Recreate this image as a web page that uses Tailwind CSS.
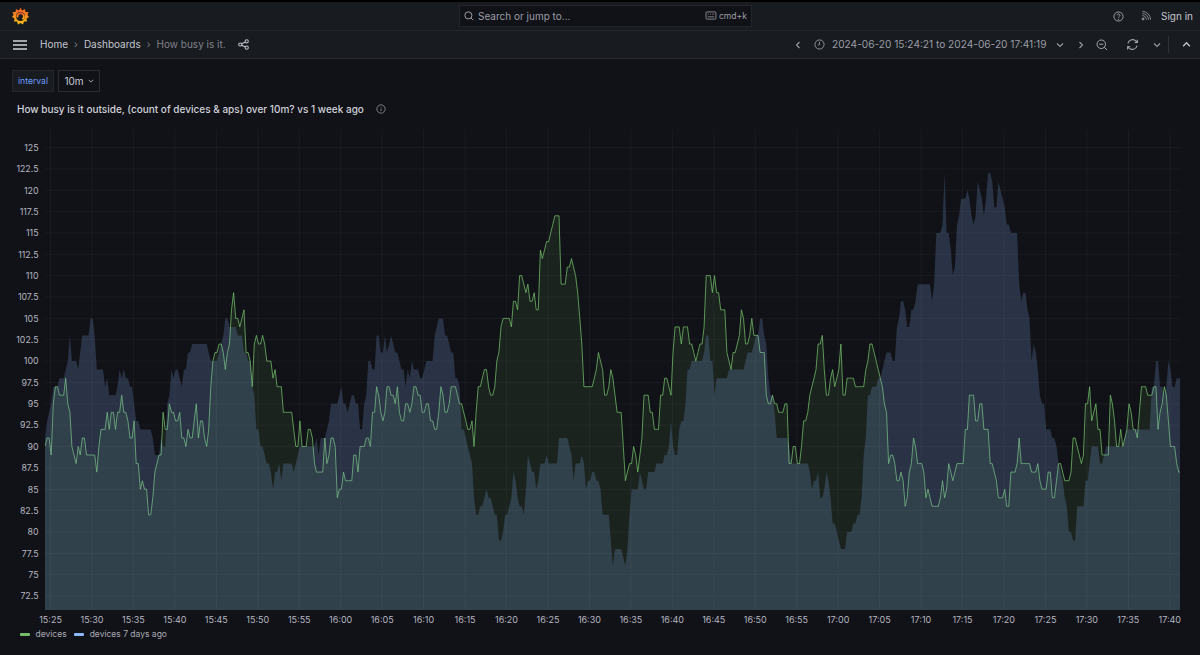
<!DOCTYPE html>
<html>
<head>
<meta charset="utf-8">
<script src="https://cdn.jsdelivr.net/npm/@tailwindcss/browser@4"></script>
</head>
<body class="bg-[#111217] overflow-hidden font-[Inter,sans-serif]">
<div class="w-[1200px] h-[655px] flex flex-col overflow-hidden text-[#ccccdc]">
  <div class="h-[2px] bg-black"></div>
  <header class="h-[29px] bg-[#181b1f] border-b border-[#25272c] flex items-center pl-[12px] pr-[7px]">
    <svg class="w-[17px] h-[18px]" viewBox="0 0 34 36">
      <defs><linearGradient id="lg" x1="0" y1="1" x2="0" y2="0"><stop offset="0" stop-color="#fcc216"/><stop offset="1" stop-color="#f05a28"/></linearGradient></defs>
      <path d="M17 1l3 6 6-3 1 6 6 0-2 6 3 4-5 3 1 6-6 0-2 6-5-3-5 3-2-6-6 0 1-6-5-3 3-4-2-6 6 0 1-6 6 3z" fill="url(#lg)"/>
      <circle cx="17" cy="19" r="9" fill="#181b1f"/>
      <path d="M11 21a6.5 6.5 0 1 1 10 3.5" fill="none" stroke="url(#lg)" stroke-width="3.5"/>
    </svg>
    <div class="ml-[430px] w-[293px] h-[22px] bg-[#111217] border border-[#22252b] flex items-center pl-[4px] pr-[4px] text-[#9a9ca6]">
      <svg class="w-[10px] h-[10px]" viewBox="0 0 24 24" fill="none" stroke="#b5b7c2" stroke-width="2"><circle cx="10.5" cy="10.5" r="8.5"/><path d="M16.5 16.5l5.5 5.5"/></svg>
      <span class="text-[10px] ml-[4px]">Search or jump to...</span>
      <span class="ml-auto flex items-center gap-[2px] text-[8.6px]">
        <svg class="w-[12px] h-[9px]" viewBox="0 0 24 20" fill="none" stroke="#8e909b" stroke-width="2"><rect x="1" y="2" width="22" height="16" rx="2"/><path d="M5 7h2M10 7h2M15 7h4M5 13h14"/></svg>
        cmd+k
      </span>
    </div>
    <svg class="ml-auto w-[11px] h-[11px]" viewBox="0 0 24 24" fill="none" stroke="#a6a8b2" stroke-width="2"><circle cx="12" cy="12" r="10"/><path d="M9 9.5a3 3 0 1 1 4.5 2.6c-1 .6-1.5 1.2-1.5 2.4"/><circle cx="12" cy="18" r=".6"/></svg>
    <svg class="ml-[17px] w-[10px] h-[10px]" viewBox="0 0 24 24" fill="none" stroke="#8e909b" stroke-width="2.2"><circle cx="5" cy="19" r="2.4" fill="#8e909b"/><path d="M3 11a10 10 0 0 1 10 10M3 6a15 15 0 0 1 15 15M3 1a20 20 0 0 1 20 20"/></svg>
    <span class="ml-[10px] text-[10px] text-[#c4c6d0]">Sign in</span>
  </header>
  <nav class="h-[28px] bg-[#181b1f] border-b border-[#2a2c31] flex items-center pl-[13px] pr-[9px] text-[10px]">
    <svg class="w-[14px] h-[10px]" viewBox="0 0 14 10" stroke="#d3d4dc" stroke-width="1.3"><path d="M0 1h14M0 5h14M0 9h14"/></svg>
    <span class="ml-[13px] text-[#c4c6d0]">Home</span>
    <span class="mx-[6px] text-[#7b7d87]">›</span>
    <span class="text-[#c4c6d0]">Dashboards</span>
    <span class="mx-[6px] text-[#7b7d87]">›</span>
    <span class="text-[#80828c]">How busy is it.</span>
    <svg class="ml-[12px] w-[11px] h-[11px]" viewBox="0 0 24 24" fill="none" stroke="#c4c6d0" stroke-width="2.2"><circle cx="5" cy="12" r="3.5"/><circle cx="19" cy="5" r="3.5"/><circle cx="19" cy="19" r="3.5"/><path d="M8 10.5l8-4M8 13.5l8 4"/></svg>
    <div class="ml-auto flex items-center text-[#9a9ca6]">
      <svg class="w-[8px] h-[8px]" viewBox="0 0 8 8" fill="none" stroke="#9a9ca6" stroke-width="1.1"><path d="M5.5 1l-3 3 3 3"/></svg>
      <svg class="ml-[11.5px] w-[11px] h-[11px]" viewBox="0 0 24 24" fill="none" stroke="#9a9ca6" stroke-width="2"><circle cx="12" cy="12" r="10"/><path d="M12 6v6l-3.5 2"/></svg>
      <span class="ml-[7.5px] text-[10.15px]">2024-06-20 15:24:21 to 2024-06-20 17:41:19</span>
      <svg class="ml-[9px] w-[8px] h-[8px]" viewBox="0 0 8 8" fill="none" stroke="#9a9ca6" stroke-width="1.1"><path d="M1 2.5l3 3 3-3"/></svg>
      <svg class="ml-[13px] w-[8px] h-[8px]" viewBox="0 0 8 8" fill="none" stroke="#9a9ca6" stroke-width="1.1"><path d="M2.5 1l3 3-3 3"/></svg>
      <svg class="ml-[11px] w-[12px] h-[12px]" viewBox="0 0 24 24" fill="none" stroke="#a6a8b2" stroke-width="2"><circle cx="10.5" cy="10.5" r="8.5"/><path d="M6.5 10.5h8M16.5 16.5l5.5 5.5"/></svg>
      <svg class="ml-[18.5px] w-[13px] h-[13px]" viewBox="0 0 24 24" fill="none" stroke="#a6a8b2" stroke-width="2"><path d="M3.5 10a9 9 0 0 1 15.5-4l2 2M20.5 14a9 9 0 0 1-15.5 4l-2-2"/><path d="M21 3v5h-5M3 21v-5h5"/></svg>
      <svg class="ml-[14px] w-[8px] h-[8px]" viewBox="0 0 8 8" fill="none" stroke="#9a9ca6" stroke-width="1.1"><path d="M1 2.5l3 3 3-3"/></svg>
      <div class="ml-[7px] w-px h-[17px] bg-[#2f3136]"></div>
      <svg class="ml-[13px] w-[9px] h-[9px]" viewBox="0 0 8 8" fill="none" stroke="#c4c6d0" stroke-width="1.2"><path d="M1 5.5l3-3 3 3"/></svg>
    </div>
  </nav>
  <div class="pl-[12px] pt-[11px] flex gap-[4px]">
    <div class="w-[42px] h-[22px] bg-[#181b1f] border border-[#25272c] flex items-center justify-center text-[8.6px] text-[#6e9fff]">interval</div>
    <div class="w-[42px] h-[22px] border border-[#2a2c31] flex items-center justify-center gap-[4px] text-[10px] text-[#ccccdc]">10m
      <svg class="w-[6px] h-[6px]" viewBox="0 0 8 8" fill="none" stroke="#a6a8b2" stroke-width="1.3"><path d="M1 2.5l3 3 3-3"/></svg>
    </div>
  </div>
  <div class="h-[34px] pl-[17px] flex items-center text-[10px] font-medium text-[#d0d1da]">
    How busy is it outside, (count of devices &amp; aps) over 10m? vs 1 week ago
    <svg class="ml-[12px] w-[10px] h-[10px]" viewBox="0 0 24 24" fill="none" stroke="#8e909b" stroke-width="2"><circle cx="12" cy="12" r="10"/><path d="M12 11v6M12 7v1.5"/></svg>
  </div>
  <div class="flex">
    <div class="w-[45px] pt-[10.8px] pr-[6.5px] flex flex-col text-[8.8px] text-[#b5b6c0] text-right">
      <div class="h-[21.36px] leading-[21.36px]">125</div><div class="h-[21.36px] leading-[21.36px]">122.5</div><div class="h-[21.36px] leading-[21.36px]">120</div><div class="h-[21.36px] leading-[21.36px]">117.5</div><div class="h-[21.36px] leading-[21.36px]">115</div><div class="h-[21.36px] leading-[21.36px]">112.5</div><div class="h-[21.36px] leading-[21.36px]">110</div><div class="h-[21.36px] leading-[21.36px]">107.5</div><div class="h-[21.36px] leading-[21.36px]">105</div><div class="h-[21.36px] leading-[21.36px]">102.5</div><div class="h-[21.36px] leading-[21.36px]">100</div><div class="h-[21.36px] leading-[21.36px]">97.5</div><div class="h-[21.36px] leading-[21.36px]">95</div><div class="h-[21.36px] leading-[21.36px]">92.5</div><div class="h-[21.36px] leading-[21.36px]">90</div><div class="h-[21.36px] leading-[21.36px]">87.5</div><div class="h-[21.36px] leading-[21.36px]">85</div><div class="h-[21.36px] leading-[21.36px]">82.5</div><div class="h-[21.36px] leading-[21.36px]">80</div><div class="h-[21.36px] leading-[21.36px]">77.5</div><div class="h-[21.36px] leading-[21.36px]">75</div><div class="h-[21.36px] leading-[21.36px]">72.5</div>
    </div>
    <svg class="block w-[1135px] h-[484px]" viewBox="45 126 1135 484">
      <polygon id="ga" fill="#73bf69" fill-opacity=".1"/>
      <polyline id="gl" fill="none" stroke="#73bf69" stroke-opacity=".75" stroke-width="1" stroke-linejoin="round"/>
      <polygon id="ba" fill="#8ab8ff" fill-opacity=".2"/>
      <g stroke="#ccccdc" stroke-opacity=".05" stroke-width="1">
        <path d="M45 147.5H1180M45 168.9H1180M45 190.2H1180M45 211.6H1180M45 232.9H1180M45 254.3H1180M45 275.7H1180M45 297H1180M45 318.4H1180M45 339.7H1180M45 361.1H1180M45 382.5H1180M45 403.8H1180M45 425.2H1180M45 446.5H1180M45 467.9H1180M45 489.3H1180M45 510.6H1180M45 532H1180M45 553.3H1180M45 574.7H1180M45 596H1180"/>
        <path d="M50.5 130V610M92 130V610M133.4 130V610M174.9 130V610M216.3 130V610M257.8 130V610M299.3 130V610M340.7 130V610M382.2 130V610M423.6 130V610M465.1 130V610M506.6 130V610M548 130V610M589.5 130V610M630.9 130V610M672.4 130V610M713.9 130V610M755.3 130V610M796.8 130V610M838.2 130V610M879.7 130V610M921.2 130V610M962.6 130V610M1004.1 130V610M1045.5 130V610M1087 130V610M1128.5 130V610M1169.9 130V610"/>
      </g>
    </svg>
  </div>
  <div class="h-[19px] pl-[29.8px] flex items-center text-[9px] text-[#b5b6c0]">
    <span class="w-[41.46px] shrink-0 text-center">15:25</span><span class="w-[41.46px] shrink-0 text-center">15:30</span><span class="w-[41.46px] shrink-0 text-center">15:35</span><span class="w-[41.46px] shrink-0 text-center">15:40</span><span class="w-[41.46px] shrink-0 text-center">15:45</span><span class="w-[41.46px] shrink-0 text-center">15:50</span><span class="w-[41.46px] shrink-0 text-center">15:55</span><span class="w-[41.46px] shrink-0 text-center">16:00</span><span class="w-[41.46px] shrink-0 text-center">16:05</span><span class="w-[41.46px] shrink-0 text-center">16:10</span><span class="w-[41.46px] shrink-0 text-center">16:15</span><span class="w-[41.46px] shrink-0 text-center">16:20</span><span class="w-[41.46px] shrink-0 text-center">16:25</span><span class="w-[41.46px] shrink-0 text-center">16:30</span><span class="w-[41.46px] shrink-0 text-center">16:35</span><span class="w-[41.46px] shrink-0 text-center">16:40</span><span class="w-[41.46px] shrink-0 text-center">16:45</span><span class="w-[41.46px] shrink-0 text-center">16:50</span><span class="w-[41.46px] shrink-0 text-center">16:55</span><span class="w-[41.46px] shrink-0 text-center">17:00</span><span class="w-[41.46px] shrink-0 text-center">17:05</span><span class="w-[41.46px] shrink-0 text-center">17:10</span><span class="w-[41.46px] shrink-0 text-center">17:15</span><span class="w-[41.46px] shrink-0 text-center">17:20</span><span class="w-[41.46px] shrink-0 text-center">17:25</span><span class="w-[41.46px] shrink-0 text-center">17:30</span><span class="w-[41.46px] shrink-0 text-center">17:35</span><span class="w-[41.46px] shrink-0 text-center">17:40</span>
  </div>
  <div class="h-[10px] pl-[20px] flex items-center text-[8.5px] text-[#a9aab4]">
    <span class="w-[10px] h-[3px] rounded-[1px] bg-[#73bf69]"></span><span class="ml-[5.5px]">devices</span>
    <span class="ml-[7px] w-[10px] h-[3px] rounded-[1px] bg-[#8ab8ff]"></span><span class="ml-[6px]">devices 7 days ago</span>
  </div>
</div>
<script>
var green = "45,447 48,438 50,438 52,455 53,447 55,405 57,387 60,397 63,397 66,378 68,405 72,422 73,447 77,464 80,448 82,456 83,438 86,438 88,455 95,455 97,472 100,448 103,430 106,430 108,413 111,430 113,413 117,430 119,413 123,397 125,413 128,422 132,438 134,438 136,422 138,463 142,490 143,482 145,490 148,490 150,516 153,498 155,472 157,464 159,455 163,455 165,413 167,430 171,405 173,413 177,422 180,413 183,438 186,447 189,430 192,438 197,405 199,438 202,422 207,447 210,430 212,383 213,362 217,353 220,345 223,345 225,353 227,370 229,353 232,310 235,293 237,318 240,327 242,320 245,310 247,312 248,353 251,363 254,387 256,345 257,337 259,345 263,345 264,337 267,350 268,362 272,363 273,380 276,370 278,387 282,387 284,397 285,413 293,413 295,430 297,447 302,422 304,447 308,447 310,430 313,438 315,464 318,472 323,472 326,438 328,464 333,438 336,447 338,498 340,490 343,490 345,472 347,481 353,481 354,456 357,456 358,472 362,448 367,438 371,447 374,413 377,388 382,413 384,422 388,388 392,397 396,405 398,385 400,413 403,422 407,405 410,413 415,388 420,397 423,413 428,405 432,420 437,430 442,388 447,413 453,385 462,405 468,430 472,422 476,447 478,413 480,387 485,370 487,373 490,390 493,397 498,363 502,327 505,318 510,318 513,327 515,302 518,310 521,277 525,287 528,293 530,285 532,302 535,293 537,310 538,310 542,252 543,260 547,242 549,242 551,233 555,217 559,217 562,233 563,285 566,285 568,268 572,259 576,277 580,320 583,343 585,387 592,387 599,353 602,363 605,397 610,388 612,370 615,383 617,397 618,413 622,413 625,448 626,482 630,465 633,465 635,448 638,472 643,438 645,397 648,397 652,413 655,430 658,430 662,397 665,380 668,380 671,397 675,355 677,328 680,328 682,343 685,328 688,328 690,345 693,345 696,360 702,345 705,328 707,277 711,277 713,293 715,277 718,293 722,310 725,310 728,353 732,370 735,353 738,345 742,312 747,345 752,320 755,337 758,337 762,353 765,353 767,395 770,404 773,397 775,405 780,413 786,413 787,405 791,463 795,448 798,464 800,464 802,447 805,422 810,397 817,370 820,345 823,337 826,373 828,393 833,372 835,387 838,377 842,345 843,377 845,395 848,378 855,378 857,387 863,387 868,362 872,345 875,353 880,373 883,385 885,404 887,413 890,463 892,456 895,464 897,482 902,472 906,508 910,472 915,438 918,464 923,464 926,498 929,490 933,508 938,508 943,482 946,498 950,464 953,482 958,464 963,464 967,430 971,397 974,397 977,422 980,405 982,405 985,430 988,430 992,463 997,482 1000,498 1005,490 1007,508 1009,508 1011,472 1016,472 1020,438 1023,464 1030,464 1033,472 1038,465 1042,490 1046,490 1050,472 1054,498 1057,482 1060,465 1065,482 1073,472 1075,438 1080,456 1083,464 1087,405 1091,388 1093,420 1096,405 1100,430 1103,456 1110,456 1112,397 1118,447 1122,430 1124,447 1130,405 1135,430 1138,438 1141,413 1143,388 1152,397 1154,388 1157,388 1159,430 1161,413 1165,388 1169,422 1172,447 1176,448 1178,465 1180,472";
var blue = "45,440 48,418 55,387 67,370 71,338 74,360 77,360 79,368 82,353 84,337 88,337 92,319 93,320 97,350 98,370 103,370 106,387 108,377 111,397 115,397 120,370 122,378 125,372 127,378 130,387 133,387 135,405 137,418 142,430 147,430 150,428 155,453 159,455 162,438 165,447 168,405 170,398 172,370 175,378 177,370 182,387 185,370 190,353 193,345 207,345 211,363 217,363 227,320 230,330 232,327 240,333 245,350 250,363 254,387 257,428 262,445 267,463 272,472 273,490 275,472 280,465 282,478 284,465 293,465 295,470 298,455 300,447 312,447 317,442 319,453 322,438 325,438 330,422 333,405 338,403 342,388 345,405 348,412 352,397 358,405 362,428 365,405 370,363 375,370 378,337 382,352 386,337 388,352 392,337 397,352 400,357 403,370 406,390 408,370 410,380 413,363 417,373 420,370 422,378 425,370 427,362 432,362 435,337 440,320 443,320 447,337 450,347 453,353 457,380 460,390 463,428 468,447 472,463 475,498 478,515 482,507 485,498 488,492 490,500 493,507 497,517 500,542 507,517 510,507 515,475 518,498 524,515 528,455 533,472 537,485 542,465 548,455 549,464 557,464 560,438 567,438 572,455 574,478 577,465 582,455 588,485 593,472 598,482 602,490 603,515 609,515 613,565 617,550 622,550 626,567 630,517 633,490 638,490 640,472 645,490 650,473 657,465 662,464 667,455 672,422 674,447 677,455 680,428 687,405 688,367 695,362 703,362 708,337 712,357 715,397 718,380 725,380 730,370 743,370 747,357 758,337 762,320 765,333 770,380 772,395 775,413 777,438 788,438 792,465 807,465 813,485 820,472 822,498 827,472 833,522 842,548 845,548 848,532 855,523 860,515 862,495 865,452 868,395 883,373 885,363 887,353 895,360 898,323 902,303 907,307 909,327 913,310 918,287 932,287 933,300 937,233 942,233 946,177 948,230 954,275 958,223 963,203 968,192 972,215 975,223 978,178 982,197 984,215 990,173 993,185 996,207 999,183 1002,193 1007,223 1010,225 1012,232 1017,233 1020,280 1023,302 1025,295 1030,320 1032,360 1034,347 1037,355 1040,393 1043,400 1048,428 1057,448 1060,465 1065,498 1070,532 1075,538 1078,505 1083,508 1087,482 1092,448 1100,448 1102,465 1108,448 1123,448 1127,430 1143,430 1150,428 1153,390 1158,363 1162,390 1165,397 1169,363 1173,390 1177,378 1180,378";
function steps(s) {
  var p = s.split(" ").map(function (q) { return q.split(",").map(Number); });
  var out = [], prev = null, i = 0, d = 2.0727;
  for (var x = 45; x < 1180; x += d) {
    while (i < p.length - 2 && p[i + 1][0] <= x) i++;
    var a = p[i], b = p[i + 1];
    var c = [a[1] + (b[1] - a[1]) * Math.max(0, Math.min(1, (x - a[0]) / (b[0] - a[0])))];
    p.forEach(function (q) { if (q[0] >= x && q[0] < x + d) c.push(q[1]); });
    var y = c[0];
    if (prev !== null) c.forEach(function (v) { if (Math.abs(v - prev) > Math.abs(y - prev)) y = v; });
    var v = Math.round((y - 147.5) / 8.543);
    prev = 147.5 + v * 8.543;
    out.push(x.toFixed(1) + "," + prev.toFixed(1));
  }
  out.push("1180," + prev.toFixed(1));
  return out;
}
var g = steps(green).join(" "), b = steps(blue).join(" ");
document.getElementById("gl").setAttribute("points", g);
document.getElementById("ga").setAttribute("points", "45,610 " + g + " 1180,610");
document.getElementById("ba").setAttribute("points", "45,610 " + b + " 1180,610");
</script>
</body>
</html>
